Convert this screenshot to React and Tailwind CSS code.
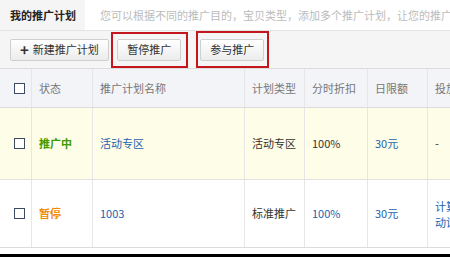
import React from 'react';

const cols = [
  { w: 'w-[32px]' },
  { w: 'w-[61px]' },
  { w: 'w-[152px]' },
  { w: 'w-[60px]' },
  { w: 'w-[63px]' },
  { w: 'w-[60px]' },
  { w: 'flex-1' },
];

const Box = () => (
  <span className="block w-[11px] h-[11px] border border-[#3d4a63] bg-white" />
);

const Cell = ({ i, children, className = '' }) => (
  <div
    className={`${cols[i].w} shrink-0 h-full flex items-center pl-[7px] border-r border-[#e6e6e6] overflow-hidden whitespace-nowrap ${className}`}
  >
    {children}
  </div>
);

const Btn = ({ children }) => (
  <button className="h-[22px] px-[9px] border border-[#cfcfcf] rounded-[2px] bg-gradient-to-b from-white to-[#ececec] text-[11px] text-[#333] flex items-center">
    {children}
  </button>
);

export default function App() {
  return (
    <div className="w-[450px] h-[257px] overflow-hidden bg-white text-[11px] text-[#333] font-['Noto_Sans_CJK_SC',sans-serif]">
      <div className="flex h-[30px] bg-[#f5f5f5]">
        <div className="w-[85px] shrink-0 flex items-center pl-[10px] font-bold text-[#222]">我的推广计划</div>
        <div className="flex-1 bg-white flex items-center pl-[15px] text-[#bbb] whitespace-nowrap overflow-hidden">
          您可以根据不同的推广目的，宝贝类型，添加多个推广计划，让您的推广更
        </div>
      </div>
      <div className="h-[38px] bg-[#f5f5f5] border-t border-[#e3e3e3] flex items-center pl-[10px]">
        <Btn>
          <span className="text-[15px] leading-none mr-[4px] font-bold">+</span>新建推广计划
        </Btn>
        <div className="ml-[2px] w-[77px] h-[36px] border-2 border-[#c4161c] flex items-center justify-center">
          <Btn>暂停推广</Btn>
        </div>
        <div className="ml-[8px] w-[73px] h-[37px] border-2 border-[#c4161c] flex items-center justify-center">
          <Btn>参与推广</Btn>
        </div>
      </div>
      <div className="h-[40px] flex bg-[#f3f4f8] border-y border-[#dcdcdc] text-[#777]">
        <Cell i={0} className="justify-center pl-0"><Box /></Cell>
        <Cell i={1}>状态</Cell>
        <Cell i={2}>推广计划名称</Cell>
        <Cell i={3}>计划类型</Cell>
        <Cell i={4}>分时折扣</Cell>
        <Cell i={5}>日限额</Cell>
        <Cell i={6} className="border-r-0">投放平台</Cell>
      </div>
      <div className="h-[72px] flex bg-[#fdfde8] border-b border-[#e2e2e2]">
        <Cell i={0} className="justify-center pl-0"><Box /></Cell>
        <Cell i={1} className="text-[#3d9a00] font-bold">推广中</Cell>
        <Cell i={2} className="text-[#1d62b0]">活动专区</Cell>
        <Cell i={3}>活动专区</Cell>
        <Cell i={4}>100%</Cell>
        <Cell i={5} className="text-[#1d62b0]">30元</Cell>
        <Cell i={6} className="border-r-0">-</Cell>
      </div>
      <div className="h-[68px] flex bg-white border-b border-[#dcdcdc]">
        <Cell i={0} className="justify-center pl-0"><Box /></Cell>
        <Cell i={1} className="text-[#f08a00] font-bold">暂停</Cell>
        <Cell i={2} className="text-[#1d62b0]">1003</Cell>
        <Cell i={3}>标准推广</Cell>
        <Cell i={4} className="text-[#1d62b0]">100%</Cell>
        <Cell i={5} className="text-[#1d62b0]">30元</Cell>
        <Cell i={6} className="border-r-0 text-[#1d62b0] leading-[16px] flex-col items-start justify-center">
          <span>计算机</span>
          <span>动设备</span>
        </Cell>
      </div>
      <div className="h-[6px] bg-white" />
      <div className="h-[3px] bg-black" />
    </div>
  );
}
